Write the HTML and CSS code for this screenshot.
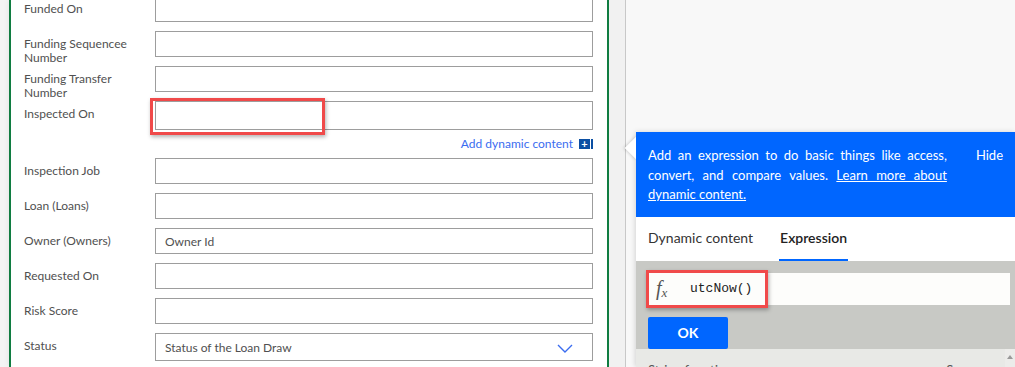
FILE: index.html
```html
<!DOCTYPE html>
<html lang="en">
<head>
    <meta charset="UTF-8">
    <title>Update a record</title>
    <link rel="stylesheet" href="styles.css">
</head>
<body>
    <div class="page">
        <div class="card">
            <div class="form">
                <div class="row"><label class="lbl">Funded On</label><div class="field"></div></div>
                <div class="row"><label class="lbl">Funding Sequencee Number</label><div class="field"></div></div>
                <div class="row"><label class="lbl">Funding Transfer Number</label><div class="field"></div></div>
                <div class="row row-focus">
                    <label class="lbl">Inspected On</label>
                    <div class="field"><span class="mark mark-field"></span></div>
                </div>
                <div class="dyn-row">
                    <span class="dyn-link">Add dynamic content</span>
                    <span class="plus">+</span>
                </div>
                <div class="row"><label class="lbl">Inspection Job</label><div class="field"></div></div>
                <div class="row"><label class="lbl">Loan (Loans)</label><div class="field"></div></div>
                <div class="row"><label class="lbl">Owner (Owners)</label><div class="field">Owner Id</div></div>
                <div class="row"><label class="lbl">Requested On</label><div class="field"></div></div>
                <div class="row"><label class="lbl">Risk Score</label><div class="field"></div></div>
                <div class="row row-select">
                    <label class="lbl">Status</label>
                    <div class="field select">
                        <span>Status of the Loan Draw</span>
                        <svg class="chevron" width="16" height="9" viewBox="0 0 16 9"><path d="M1 1 L8 8 L15 1" fill="none" stroke="#3a6cf0" stroke-width="1.4"/></svg>
                    </div>
                </div>
            </div>
        </div>

        <div class="side">
            <div class="pane"></div>
            <div class="flyout">
                <span class="beak"></span>
                <div class="flyout-head">
                    <p class="intro">Add an expression to do basic things like access, convert, and compare values. <a>Learn more about dynamic content.</a></p>
                    <span class="hide">Hide</span>
                </div>
                <div class="tabs">
                    <span class="tab">Dynamic content</span>
                    <span class="tab active">Expression</span>
                </div>
                <div class="expr">
                    <div class="expr-input">
                        <span class="fx">f<sub>x</sub></span>
                        <span class="code">utcNow()</span>
                        <span class="mark mark-expr"></span>
                    </div>
                    <button class="ok">OK</button>
                </div>
                <div class="fn-list">
                    <span>String functions</span>
                    <span class="see">See more</span>
                    <span class="scroll"><span class="up"></span></span>
                </div>
            </div>
        </div>
    </div>
</body>
</html>
```

FILE: styles.css
```css
html, body {
    margin: 0;
    height: 100%;
}

body {
    font-family: Lato, "Noto Sans", sans-serif;
    background-color: #f4f4f4;
    overflow: hidden;
}

.page {
    display: flex;
    height: 367px;
}

/* left form card */
.card {
    width: 600px;
    box-sizing: border-box;
    margin-left: 9px;
    background: #fff;
    border-left: 2px solid #107c41;
    border-right: 2px solid #107c41;
    box-shadow: 0 0 6px rgba(0,0,0,0.08);
    padding: 0 14px 0 13px;
}

.form {
    margin-top: -4px;
}

.row {
    display: flex;
    height: 26px;
    margin-bottom: 9px;
}

.row-focus {
    height: 29px;
    margin-bottom: 0;
}

.row-select {
    height: 28px;
}

.lbl {
    width: 131px;
    flex-shrink: 0;
    padding-top: 6px;
    padding-right: 10px;
    box-sizing: border-box;
    font-size: 12px;
    line-height: 14px;
    color: #505050;
}

.field {
    flex: 1;
    position: relative;
    border: 1px solid #9d9d9d;
    box-sizing: border-box;
    font-size: 12px;
    color: #505050;
    padding: 0 9px;
    display: flex;
    align-items: center;
}

.select {
    justify-content: space-between;
    padding-right: 19px;
}

.chevron {
    margin-top: 2px;
}

.dyn-row {
    height: 29px;
    display: flex;
    justify-content: flex-end;
    align-items: center;
    font-size: 12px;
    margin-top: -1px;
}

.dyn-link {
    color: #3a6cf0;
}

.plus {
    width: 11px;
    height: 10px;
    margin-left: 6px;
    background: #0b4fa3;
    border-right: 2px solid #0b4fa3;
    box-shadow: inset -1px 0 0 #fff;
    padding-right: 1px;
    color: #fff;
    font-size: 11px;
    font-weight: bold;
    line-height: 10px;
    text-align: center;
}

/* red call-out boxes */
.mark {
    position: absolute;
    box-sizing: border-box;
    border: 3px solid #f04a4a;
    box-shadow: 1px 2px 4px rgba(0,0,0,0.3);
}

.mark-field {
    left: -6px;
    top: -4px;
    width: 175px;
    height: 37px;
}

.mark-expr {
    left: -1px;
    top: -3px;
    width: 122px;
    height: 38px;
}

/* right side */
.side {
    flex: 1;
    position: relative;
    display: flex;
    padding-left: 16px;
    background: #f1f1f1;
}

.pane {
    flex: 1;
    border-left: 1px solid #c8c8c8;
    background: #f8f8f8;
}

.flyout {
    position: absolute;
    left: 27px;
    top: 132px;
    right: 0;
    bottom: 0;
    z-index: 1;
    background: #fff;
    box-shadow: -1px 0 5px rgba(0,0,0,0.15);
}

.beak {
    position: absolute;
    left: -8px;
    top: 8px;
    width: 16px;
    height: 16px;
    background: #fff;
    transform: rotate(45deg);
    box-shadow: -1px 1px 3px rgba(0,0,0,0.15);
    z-index: -1;
}

.flyout-head {
    display: flex;
    align-items: flex-start;
    background: #0066ff;
    color: #fff;
    padding: 14px 12px 12px;
    font-size: 13px;
    line-height: 19.5px;
}

.intro {
    width: 300px;
    margin: 0;
    text-align: justify;
}

.intro a {
    text-decoration: underline;
}

.hide {
    margin-left: 29px;
}

.tabs {
    display: flex;
    height: 44px;
    padding-left: 12px;
    font-size: 14px;
    color: #333;
}

.tab {
    display: flex;
    align-items: center;
    border-bottom: 2px solid transparent;
    margin-right: 26px;
}

.tab.active {
    font-weight: 600;
    color: #222;
    border-bottom-color: #0066ff;
    padding: 0 1px;
}

.expr {
    background: #c8c9c5;
    padding: 12px 5px 0 11px;
    height: 88px;
    box-sizing: border-box;
}

.expr-input {
    position: relative;
    height: 32px;
    background: #fdfdfb;
    display: flex;
    align-items: center;
    padding-left: 9px;
}

.fx {
    font-family: "Liberation Serif", serif;
    font-style: italic;
    font-size: 20px;
    color: #555;
    width: 34px;
}

.fx sub {
    font-size: 13px;
    vertical-align: -2px;
}

.code {
    font-family: "Liberation Mono", monospace;
    font-size: 13px;
    color: #222;
}

.ok {
    margin: 12px 0 0 1px;
    width: 80px;
    height: 32px;
    border: none;
    border-radius: 2px;
    background: #0066ff;
    color: #fff;
    font-family: inherit;
    font-size: 14px;
    font-weight: bold;
}

.fn-list {
    position: relative;
    display: flex;
    background: #e8e9e6;
    height: 40px;
    padding: 13px 0 0 12px;
    box-sizing: border-box;
    font-size: 13px;
    color: #555;
}

.see {
    margin-left: 208px;
}

.scroll {
    position: absolute;
    right: 0;
    top: 0;
    bottom: 0;
    width: 10px;
    background: #ececea;
}

.up {
    position: absolute;
    left: 2px;
    top: 6px;
    border-left: 3px solid transparent;
    border-right: 3px solid transparent;
    border-bottom: 4px solid #999;
}
```
